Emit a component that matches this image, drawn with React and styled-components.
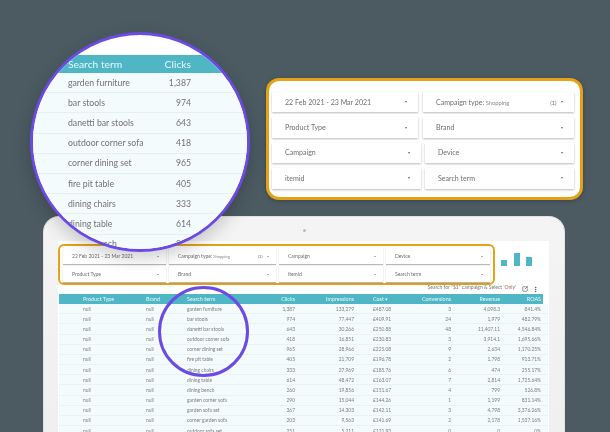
import React from "react";
import styled, { createGlobalStyle } from "styled-components";
import { SquareArrowOutUpRight, MoreVertical } from "lucide-react";

const Global = createGlobalStyle`
  html, body { margin: 0; padding: 0; background: #4c5b62; }
  body { font-family: Lato, "Liberation Sans", sans-serif; }
  * { box-sizing: border-box; }
`;

const Stage = styled.div`
  position: relative;
  width: 610px;
  height: 432px;
  overflow: hidden;
  padding: 216px 0 0 43px;
  background: #4c5b62;
`;

const Laptop = styled.div`
  position: relative;
  width: 522px;
  height: 240px;
  padding: 24px 16px 0 15px;
  background: linear-gradient(#f4f4f4, #efefef);
  border: 1px solid #e2e2e2;
  border-bottom: 0;
  border-radius: 16px 16px 0 0;
`;

const Camera = styled.span`
  position: absolute;
  top: 12px;
  left: 259px;
  width: 3px;
  height: 3px;
  border-radius: 50%;
  background: #b9bdbf;
`;

const Screen = styled.div`
  width: 491px;
  height: 200px;
  margin-left: -1px;
  padding-top: 3px;
  background: #fff;
  filter: blur(0.3px);
`;

const TopBar = styled.div`
  display: flex;
  align-items: flex-start;
`;

const Callout = styled.div`
  background: #fff;
  border: ${(p) => (p.$big ? "3px" : "2px")} solid #e6a216;
  border-radius: ${(p) => (p.$big ? "13px" : "6px")};
`;

const SmallCallout = styled(Callout)`
  width: 437px;
  height: 41px;
  padding: 2px 3px;
  display: grid;
  grid-template-columns: 103px 107px 104px 104px;
  grid-auto-rows: 16px;
  column-gap: 3px;
  row-gap: 2px;
  position: relative;
  z-index: 1;
`;

const BigCallout = styled(Callout)`
  position: absolute;
  left: 266px;
  top: 78px;
  width: 317px;
  height: 122px;
  padding: 11px 6px 0 3px;
  box-shadow: 0 1px 4px rgba(0, 0, 0, 0.25);
  display: flex;
  flex-direction: column;
  gap: 5px;
  filter: blur(0.3px);
`;

const CalloutRow = styled.div`
  display: grid;
  grid-template-columns: ${(p) => (p.$even ? "149px 149px" : "146px 151px")};
  column-gap: ${(p) => (p.$even ? "4px" : "5px")};
  height: 20.4px;
`;

const Filter = styled.div`
  display: flex;
  align-items: center;
  min-width: 0;
  padding: ${(p) => (p.$big ? "0 11.5px 0 13px" : "0 7.5px 0 9px")};
  background: #fff;
  color: #6d6d6d;
  font-size: ${(p) => (p.$big ? "7.05px" : "5px")};
  white-space: nowrap;
  box-shadow: 0 ${(p) => (p.$big ? "1px 2px" : "1px 1px")} rgba(0, 0, 0, 0.28);
`;

const FilterLabel = styled.span`
  flex: 1;
`;

const FilterValue = styled.span`
  font-size: 0.82em;
  color: #8a8a8a;
`;

const FilterCount = styled.span`
  font-size: 0.8em;
  margin-right: 4px;
`;

const Caret = styled.span`
  width: 0;
  height: 0;
  border-left: ${(p) => (p.$big ? "1.7px" : "1.3px")} solid transparent;
  border-right: ${(p) => (p.$big ? "1.7px" : "1.3px")} solid transparent;
  border-top: ${(p) => (p.$big ? "2.2px" : "1.6px")} solid #666;
`;

const Bars = styled.div`
  display: flex;
  align-items: flex-end;
  gap: 6.5px;
  height: 22px;
  margin-left: 6px;
`;

const Bar = styled.span`
  width: 6px;
  height: ${(p) => p.$h}px;
  background: #4fb6c5;
`;

const Toolbar = styled.div`
  display: flex;
  justify-content: flex-end;
  align-items: flex-start;
  height: 9px;
  padding-right: 10px;
  color: #777;
  font-size: 5px;
  line-height: 7px;
`;

const ToolText = styled.span`
  margin: -1px 6px 0 0;
`;

const Only = styled.span`
  color: #a8695a;
`;

const ToolIcon = styled.span`
  display: flex;
  margin: 1px 0 0 ${(p) => p.$gap}px;
  color: #555;
`;

const Table = styled.div`
  margin-left: 1px;
  width: 489px;
  font-size: 4.9px;
  color: #7d7d7d;
`;

const grid = `
  display: grid;
  grid-template-columns: 63px 41px 78px 30px 59px 56px 41px 49px 41px;
  padding: 0 7px 0 24px;
  align-items: center;
`;

const TableHead = styled.div`
  ${grid}
  width: 484px;
  height: 10px;
  background: #4fb6c5;
  color: #e9f8fa;
  font-size: 5.4px;
`;

const TableRow = styled.div`
  ${grid}
  height: 10.18px;
  background: #f3fbfd;
  border-bottom: 1px solid #e9f2f4;
`;

const Cell = styled.span`
  white-space: nowrap;
  text-align: ${(p) => (p.$right ? "right" : "left")};
  padding-left: ${(p) => (p.$indent ? "19px" : "0")};
`;

const Loupe = styled.div`
  position: absolute;
  left: ${(p) => p.$x}px;
  top: ${(p) => p.$y}px;
  width: ${(p) => p.$d}px;
  height: ${(p) => p.$d}px;
  border: 3px solid #6b4be3;
  border-radius: 50%;
`;

const BigLoupe = styled(Loupe)`
  background: #fff;
  overflow: hidden;
  padding-top: 20px;
  box-shadow: 0 6px 18px rgba(0, 0, 0, 0.2);
`;

const LoupeHead = styled.div`
  display: grid;
  grid-template-columns: 1fr auto;
  align-items: center;
  height: 18px;
  padding: 0 56px 0 35px;
  background: #4fb6c5;
  color: #e8f8fa;
  font-size: 10.3px;
  filter: blur(0.2px);
`;

const LoupeRow = styled.div`
  display: grid;
  grid-template-columns: 1fr auto;
  align-items: center;
  height: 20.2px;
  padding: 0 56px 1px 35px;
  background: #f3fbfd;
  border-bottom: 1px solid #e6eff1;
  color: #727272;
  font-size: 8.7px;
  filter: blur(0.25px);
`;

const rows = [
  ["garden furniture", "1,387", "133,279", "£487.08", "3", "4,098.3", "841.4%"],
  ["bar stools", "974", "77,447", "£409.91", "24", "1,979", "482.79%"],
  ["danetti bar stools", "643", "30,266", "£250.88", "48", "11,407.11", "4,546.84%"],
  ["outdoor corner sofa", "418", "16,851", "£230.83", "3", "3,914.1", "1,695.66%"],
  ["corner dining set", "965", "28,966", "£225.08", "9", "2,634", "1,170.25%"],
  ["fire pit table", "405", "21,709", "£196.78", "2", "1,798", "913.71%"],
  ["dining chairs", "333", "27,969", "£185.76", "6", "474", "255.17%"],
  ["dining table", "614", "48,472", "£163.07", "7", "2,814", "1,725.64%"],
  ["dining bench", "260", "19,856", "£151.67", "4", "799", "526.8%"],
  ["garden corner sofa", "290", "15,044", "£144.26", "1", "1,199", "831.14%"],
  ["garden sofa set", "367", "14,303", "£142.11", "3", "4,798", "3,376.26%"],
  ["corner garden sofa", "203", "9,563", "£141.69", "2", "2,178", "1,537.16%"],
  ["outdoor sofa set", "251", "5,211", "£121.93", "0", "0", "0%"],
];

function FilterBox({ big, label, value, count }) {
  return (
    <Filter $big={big}>
      <FilterLabel>
        {label}
        {value && <FilterValue> {value}</FilterValue>}
      </FilterLabel>
      {count && <FilterCount>{count}</FilterCount>}
      <Caret $big={big} />
    </Filter>
  );
}

export default function App() {
  return (
    <>
      <Global />
      <Stage>
        <Laptop>
          <Camera />
          <Screen>
            <TopBar>
              <SmallCallout>
                <FilterBox label="22 Feb 2021 - 23 Mar 2021" />
                <FilterBox label="Campaign type:" value="Shopping" count="(3)" />
                <FilterBox label="Campaign" />
                <FilterBox label="Device" />
                <FilterBox label="Product Type" />
                <FilterBox label="Brand" />
                <FilterBox label="itemid" />
                <FilterBox label="Search term" />
              </SmallCallout>
              <Bars>
                <Bar $h={6} />
                <Bar $h={13} />
                <Bar $h={9} />
              </Bars>
            </TopBar>
            <Toolbar>
              <ToolText>
                Search for "$1" campaign &amp; Select <Only>'Only'</Only>
              </ToolText>
              <ToolIcon $gap={0}>
                <SquareArrowOutUpRight size={6} strokeWidth={2.5} />
              </ToolIcon>
              <ToolIcon $gap={4}>
                <MoreVertical size={7} strokeWidth={3} />
              </ToolIcon>
            </Toolbar>
            <Table>
              <TableHead>
                <Cell>Product Type</Cell>
                <Cell>Brand</Cell>
                <Cell>Search term</Cell>
                <Cell $right>Clicks</Cell>
                <Cell $right>Impressions</Cell>
                <Cell $indent>Cost ▾</Cell>
                <Cell $right>Conversions</Cell>
                <Cell $right>Revenue</Cell>
                <Cell $right>ROAS</Cell>
              </TableHead>
              {rows.map((r) => (
                <TableRow key={r[0]}>
                  <Cell>null</Cell>
                  <Cell>null</Cell>
                  <Cell>{r[0]}</Cell>
                  <Cell $right>{r[1]}</Cell>
                  <Cell $right>{r[2]}</Cell>
                  <Cell $indent>{r[3]}</Cell>
                  <Cell $right>{r[4]}</Cell>
                  <Cell $right>{r[5]}</Cell>
                  <Cell $right>{r[6]}</Cell>
                </TableRow>
              ))}
            </Table>
          </Screen>
        </Laptop>

        <BigCallout $big>
          <CalloutRow>
            <FilterBox big label="22 Feb 2021 - 23 Mar 2021" />
            <FilterBox big label="Campaign type:" value="Shopping" count="(1)" />
          </CalloutRow>
          <CalloutRow>
            <FilterBox big label="Product Type" />
            <FilterBox big label="Brand" />
          </CalloutRow>
          <CalloutRow $even>
            <FilterBox big label="Campaign" />
            <FilterBox big label="Device" />
          </CalloutRow>
          <CalloutRow $even>
            <FilterBox big label="itemid" />
            <FilterBox big label="Search term" />
          </CalloutRow>
        </BigCallout>

        <Loupe $x={158} $y={286} $d={91} />

        <BigLoupe $x={30} $y={32} $d={220}>
          <LoupeHead>
            <span>Search term</span>
            <span>Clicks</span>
          </LoupeHead>
          {rows.slice(0, 9).map((r) => (
            <LoupeRow key={r[0]}>
              <span>{r[0]}</span>
              <Cell $right>{r[1]}</Cell>
            </LoupeRow>
          ))}
        </BigLoupe>
      </Stage>
    </>
  );
}
